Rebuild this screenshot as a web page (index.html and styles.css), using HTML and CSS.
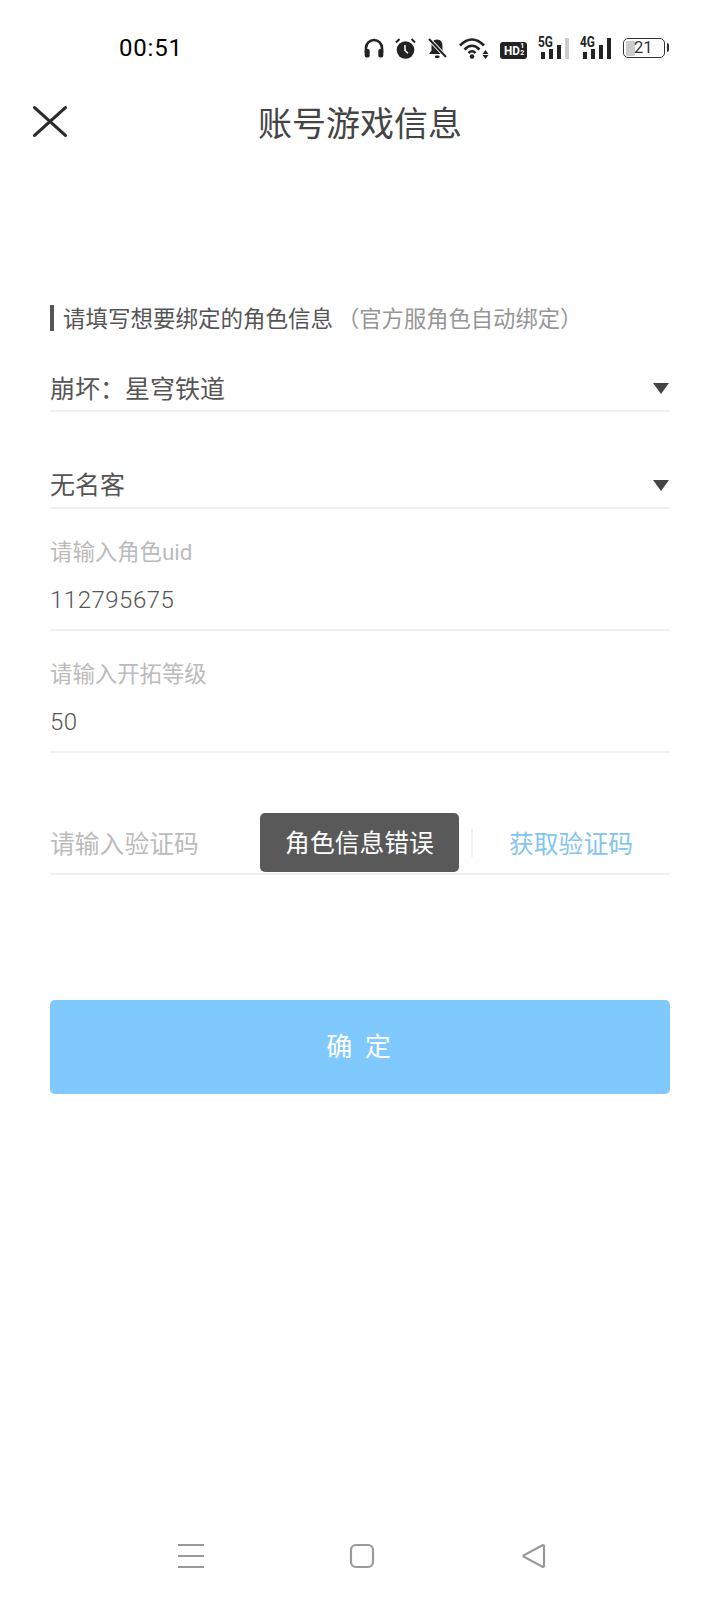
FILE: index.html
```html
<!DOCTYPE html>
<html lang="zh">
<head>
<meta charset="utf-8">
<title>账号游戏信息</title>
<link rel="stylesheet" href="styles.css">
</head>
<body>
<div class="screen">
  <div class="status">
    <span class="time">00:51</span>
    <div class="status-icons">
      <svg class="si" width="20" height="20" viewBox="0 0 20 20"><path d="M2 15V10a8 8 0 0 1 16 0v5" fill="none" stroke="#222" stroke-width="2.600"/><rect x="0.700" y="11" width="5" height="8.500" rx="1.800" fill="#222"/><rect x="14.300" y="11" width="5" height="8.500" rx="1.800" fill="#222"/></svg>
      <svg class="si" width="21" height="21" viewBox="0 0 21 21"><circle cx="10.500" cy="12" r="8.800" fill="#222"/><path d="M10 7v5.500l3 2.800" fill="none" stroke="#fff" stroke-width="1.500"/><path d="M1 4.500l3.500-3.500M20 4.500L16.500 1" stroke="#222" stroke-width="2"/></svg>
      <svg class="si" width="22" height="21" viewBox="0 0 22 21"><path d="M10 1.500c-3.500 0-5.500 2.800-5.500 6.500v4.500L2 16h16l-2.500-3.500V8c0-3.700-2-6.500-5.500-6.500z" fill="#222"/><rect x="8" y="17.500" width="4.500" height="2.500" rx="1" fill="#222"/><path d="M2 1l17 18" stroke="#fff" stroke-width="4"/><path d="M2 1l17 18" stroke="#222" stroke-width="2"/></svg>
      <svg class="si" width="30" height="21" viewBox="0 0 30 21"><path d="M1 7.500Q13-4.500 25 7.500M5.500 11.500Q13 4 20.500 11.500M9.500 15Q13 11.500 16.500 15" fill="none" stroke="#222" stroke-width="2.500"/><circle cx="13" cy="18.500" r="2.300" fill="#222"/><path d="M26.500 12l-3 4h6zM26.500 21l-3-4h6z" fill="#222"/></svg>
      <div class="hd"><b>HD</b><span class="hd-frac">1<br>2</span></div>
      <div class="signal">
        <span class="net">5G</span>
        <i class="b1"></i><i class="b2"></i><i class="b3"></i><i class="b4 off"></i>
      </div>
      <div class="signal">
        <span class="net">4G</span>
        <i class="b1"></i><i class="b2"></i><i class="b3"></i><i class="b4"></i>
      </div>
      <div class="battery"><i class="charge"></i><span>21</span><i class="cap"></i></div>
    </div>
  </div>

  <div class="topbar">
    <svg class="close" width="36" height="33" viewBox="0 0 36 33"><path d="M2.600 2.600l30.800 27.800M33.400 2.600L2.600 30.400" stroke="#2b2b2b" stroke-width="3.200" stroke-linecap="round"/></svg>
    <h1 class="title">账号游戏信息</h1>
  </div>

  <main class="form">
    <div class="section"><span class="section-main">请填写想要绑定的角色信息</span><span class="section-note">（官方服角色自动绑定）</span></div>
    <div class="field select first"><span>崩坏：星穹铁道</span><i class="arrow"></i></div>
    <div class="field select second"><span>无名客</span><i class="arrow"></i></div>
    <div class="labelled">
      <div class="label">请输入角色uid</div>
      <div class="field value">112795675</div>
    </div>
    <div class="labelled">
      <div class="label">请输入开拓等级</div>
      <div class="field value">50</div>
    </div>
    <div class="field code">
      <span class="placeholder">请输入验证码</span>
      <span class="get-code">获取验证码</span>
      <div class="toast">角色信息错误</div>
    </div>
    <button class="confirm">确 定</button>
  </main>

  <nav class="navbar">
    <svg width="26" height="26" viewBox="0 0 26 26"><path d="M0 2h26M0 13h26M0 24h26" stroke="#999" stroke-width="2.200"/></svg>
    <svg width="26" height="26" viewBox="0 0 26 26"><rect x="2" y="2" width="22" height="22" rx="5" fill="none" stroke="#999" stroke-width="2.200"/></svg>
    <svg width="26" height="26" viewBox="0 0 26 26"><path d="M24 3v20a1 1 0 0 1-1.500.800L4.500 14a1 1 0 0 1 0-2L22.500 2.200a1 1 0 0 1 1.500.800z" fill="none" stroke="#999" stroke-width="2.200"/></svg>
  </nav>
</div>
</body>
</html>
```
FILE: styles.css
```css
* { box-sizing: border-box; }
html, body { margin: 0; padding: 0; background: #fff; }
body { font-family: Roboto, "Noto Sans CJK SC", sans-serif; }
.screen { position: relative; width: 720px; height: 1600px; display: flex; flex-direction: column; overflow: hidden; background: #fff; }

.status { height: 68px; padding: 28px 55px 0 119px; display: flex; justify-content: space-between; align-items: flex-start; }
.time { font-size: 24px; line-height: 40px; color: #000; font-weight: 400; letter-spacing: .8px; }
.status-icons { display: flex; align-items: center; height: 40px; gap: 10.700px; }
.si { flex: none; }
.hd { width: 27px; height: 17px; margin-top: 4px; background: #222; border-radius: 3px; color: #fff; display: flex; align-items: center; justify-content: center; line-height: 1; }
.hd b { font-size: 13px; transform: scaleX(.9); }
.hd-frac { font-size: 7px; line-height: 7px; font-weight: 700; }
.signal { position: relative; width: 32px; height: 21px; display: flex; align-items: flex-end; gap: 4px; padding-left: 3px; }
.signal i { width: 4px; background: #222; display: block; }
.signal .net { position: absolute; left: 0; top: -2px; font-size: 14px; line-height: 13px; font-weight: 700; color: #222; transform: scaleX(.85); transform-origin: left; }
.signal .b1 { height: 7px; }
.signal .b2 { height: 10px; }
.signal .b3 { height: 14px; }
.signal .b4 { height: 21px; }
.signal .off { background: #ccc; }
.battery { position: relative; width: 42px; height: 20px; border: 1.500px solid #333; border-radius: 5px; font-size: 16.500px; line-height: 17px; color: #333; padding-left: 10px; }
.battery span { position: relative; }
.charge { position: absolute; left: 1.500px; top: 1.500px; bottom: 1.500px; width: 9px; background: #ccc; border-radius: 1px; }
.cap { position: absolute; right: -5px; top: 4px; width: 2.500px; height: 9px; background: #333; border-radius: 0 2px 2px 0; }

.topbar { position: relative; height: 108px; padding-top: 3px; display: flex; align-items: center; justify-content: center; }
.close { position: absolute; left: 32px; top: 37px; }
.title { margin: 0; font-size: 34px; line-height: 44px; font-weight: 400; color: #444; }

.form { padding: 0 50px; }
.section { margin-top: 129px; height: 26px; margin-bottom: 1px; padding-bottom: 2px; border-left: 4px solid #555; padding-left: 9px; display: flex; align-items: center; font-size: 22.500px; color: #555; white-space: nowrap; }
.section-note { color: #969696; margin-left: 4px; font-size: 22.300px; }
.field { border-bottom: 2px solid #f0f0f0; font-size: 25px; color: #555; display: flex; align-items: center; }
.select { justify-content: space-between; }
.select span { margin-bottom: 3px; }
.select.first { height: 80px; padding-top: 34px; }
.select.second { height: 97px; padding-top: 52px; }
.select.second span { margin-bottom: 5px; }
.arrow { width: 0; height: 0; margin-right: 1px; border-left: 8px solid transparent; border-right: 8px solid transparent; border-top: 11px solid #444; }
.labelled { margin-top: 28px; }
.label { font-size: 22.400px; line-height: 30px; padding-bottom: 2px; box-sizing: content-box; height: 30px; color: #bbb; }
.value { height: 62px; padding-top: 2px; font-size: 24px; letter-spacing: .5px; color: #555; font-weight: 300; }
.code { position: relative; height: 65px; margin-top: 57px; padding-top: 1px; justify-content: space-between; }
.placeholder { color: #bbb; font-size: 24.800px; }
.get-code { position: relative; font-size: 24.800px; color: #83c5ee; margin-right: 37px; }
.get-code::before { content: ""; position: absolute; left: -38px; top: 5px; bottom: 3px; width: 2px; background: #f0f0f0; }
.toast { position: absolute; left: 210px; top: 3px; width: 199px; height: 59px; padding-bottom: 3px; background: #595959; border-radius: 5px; color: #fff; font-size: 24.800px; display: flex; align-items: center; justify-content: center; }
.confirm { display: block; width: 100%; height: 94px; margin-top: 125px; padding: 0 0 5px; border: 0; border-radius: 5px; background: #80c9ff; color: #fff; font-family: inherit; font-size: 26px; letter-spacing: 3px; }

.navbar { position: absolute; left: 178px; top: 1543px; width: 368px; display: flex; justify-content: space-between; }
```
